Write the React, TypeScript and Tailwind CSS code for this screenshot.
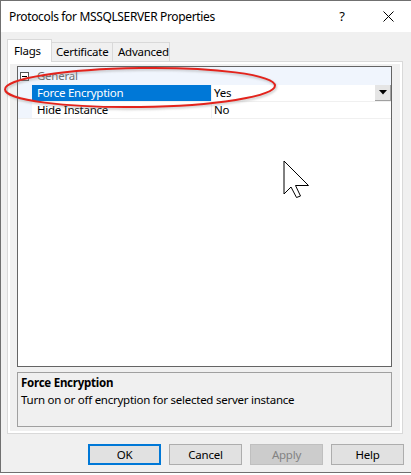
import React from "react";

const rows = [
  { name: "Force Encryption", value: "Yes", selected: true },
  { name: "Hide Instance", value: "No", selected: false },
];

const buttons = [
  { label: "OK", kind: "default" },
  { label: "Cancel", kind: "normal" },
  { label: "Apply", kind: "disabled" },
  { label: "Help", kind: "normal" },
];

function CloseGlyph() {
  return (
    <svg width="11" height="11" viewBox="0 0 11 11">
      <path d="M0.5 0.5 L10.5 10.5 M10.5 0.5 L0.5 10.5" stroke="#000" strokeWidth="1" />
    </svg>
  );
}

function Cursor() {
  return (
    <svg
      className="absolute left-[283px] top-[160px]"
      width="28"
      height="40"
      viewBox="0 0 28 40"
    >
      <polygon
        points="1,1 1,34 8,27 13.5,37.5 17.5,36 12.5,25.5 25.5,25.5"
        fill="#fff"
        stroke="#000"
        strokeWidth="1"
        strokeLinejoin="miter"
      />
    </svg>
  );
}

function Highlight() {
  return (
    <svg className="pointer-events-none absolute left-0 top-[60px]" width="290" height="56" viewBox="0 0 290 56">
      <defs>
        <filter id="soft" x="-10%" y="-30%" width="120%" height="160%">
          <feGaussianBlur stdDeviation="1.2" />
        </filter>
      </defs>
      <ellipse cx="141" cy="29" rx="135" ry="19.5" transform="rotate(-0.8 141 29)" fill="none" stroke="#888" strokeWidth="2" opacity="0.5" filter="url(#soft)" />
      <ellipse cx="140" cy="27.5" rx="135" ry="19.5" transform="rotate(-0.8 140 27.5)" fill="none" stroke="#e3231c" strokeWidth="2" />
    </svg>
  );
}

export default function App() {
  return (
    <div className="relative h-[475px] w-[411px] overflow-hidden bg-white font-['Noto_Sans',sans-serif] text-[11.5px] leading-none tracking-[-0.25px] text-black">
      <div className="flex h-[473px] flex-col border-b border-l border-t border-[#707070] bg-[#f0f0f0]">
        {/* title bar */}
        <div className="flex h-[31px] items-center bg-white">
          <span className="flex-1 pl-[8px] text-[12px] tracking-[-0.35px]">Protocols for MSSQLSERVER Properties</span>
          <span className="grid h-full w-[46px] place-items-center text-[13px]">?</span>
          <span className="grid h-full w-[46px] place-items-center">
            <CloseGlyph />
          </span>
        </div>

        <div className="flex flex-1 flex-col pl-[6px] pt-[7px]">
          {/* tabs */}
          <div className="relative z-10 flex h-[22px] items-end">
            <div className="-mb-px flex h-[23px] w-[45px] items-center border-l border-r border-t border-[#d9d9d9] bg-white pl-[6px]">
              Flags
            </div>
            <div className="flex h-[19px] w-[61px] items-center border-r border-t border-[#d9d9d9] pl-[4px]">
              Certificate
            </div>
            <div className="flex h-[19px] w-[57px] items-center border-r border-t border-[#d9d9d9] pl-[5px]">
              Advanced
            </div>
          </div>

          {/* tab page */}
          <div className="h-[373px] w-[396px] border border-[#d9d9d9]">
            <div className="flex h-full flex-col border-2 border-white bg-[#f0f0f0] pb-[4px] pl-[7px] pr-[8px] pt-[2px]">
              {/* property grid */}
              <div className="flex h-[301px] flex-col border border-[#646464] bg-white">
                <div className="flex h-[18px] items-center bg-[#f0f5fd]">
                  <div className="flex w-[14px] items-center pl-[2px]">
                    <span className="relative block h-[9px] w-[9px] border border-[#555] bg-white">
                      <span className="absolute left-[1px] top-[3px] block h-px w-[5px] bg-black" />
                    </span>
                  </div>
                  <span className="pl-[5px] text-[#6d6d6d]">General</span>
                </div>
                {rows.map((r) => (
                  <div key={r.name} className="flex h-[17px] border-b border-[#f0f0f0]">
                    <div className="w-[14px] bg-[#f0f5fd]" />
                    <div
                      className={
                        r.selected
                          ? "flex w-[179px] items-center bg-[#0078d7] pl-[5px] text-white"
                          : "flex w-[179px] items-center pl-[5px]"
                      }
                    >
                      {r.name}
                    </div>
                    <div className="w-px bg-[#f0f0f0]" />
                    <div className="flex flex-1 items-center justify-between pl-[2px]">
                      <span>{r.value}</span>
                      {r.selected && (
                        <span className="grid h-[16px] w-[16px] place-items-center border-b border-r border-[#a0a0a0] bg-[#e5e5e5]">
                          <svg width="8" height="5" viewBox="0 0 8 5">
                            <polygon points="0,0 8,0 4,4.5" fill="#000" />
                          </svg>
                        </span>
                      )}
                    </div>
                  </div>
                ))}
              </div>

              {/* description */}
              <div className="mt-[5px] flex h-[55px] flex-col border border-[#a0a0a0] px-[3px] pt-[4px]">
                <span className="font-bold">Force Encryption</span>
                <span className="mt-[5px]">Turn on or off encryption for selected server instance</span>
              </div>
            </div>
          </div>

          {/* buttons */}
          <div className="mt-[10px] flex justify-end gap-[8px] pr-[7px]">
            {buttons.map((b) => (
              <div
                key={b.label}
                className={
                  b.kind === "default"
                    ? "grid h-[21px] w-[73px] place-items-center border-2 border-[#0078d7] bg-[#e1e1e1]"
                    : b.kind === "disabled"
                    ? "grid h-[21px] w-[73px] place-items-center border border-[#bfbfbf] bg-[#cccccc] text-[#838383]"
                    : "grid h-[21px] w-[73px] place-items-center border border-[#adadad] bg-[#e1e1e1]"
                }
              >
                {b.label}
              </div>
            ))}
          </div>
        </div>
      </div>

      <Highlight />
      <Cursor />
    </div>
  );
}
